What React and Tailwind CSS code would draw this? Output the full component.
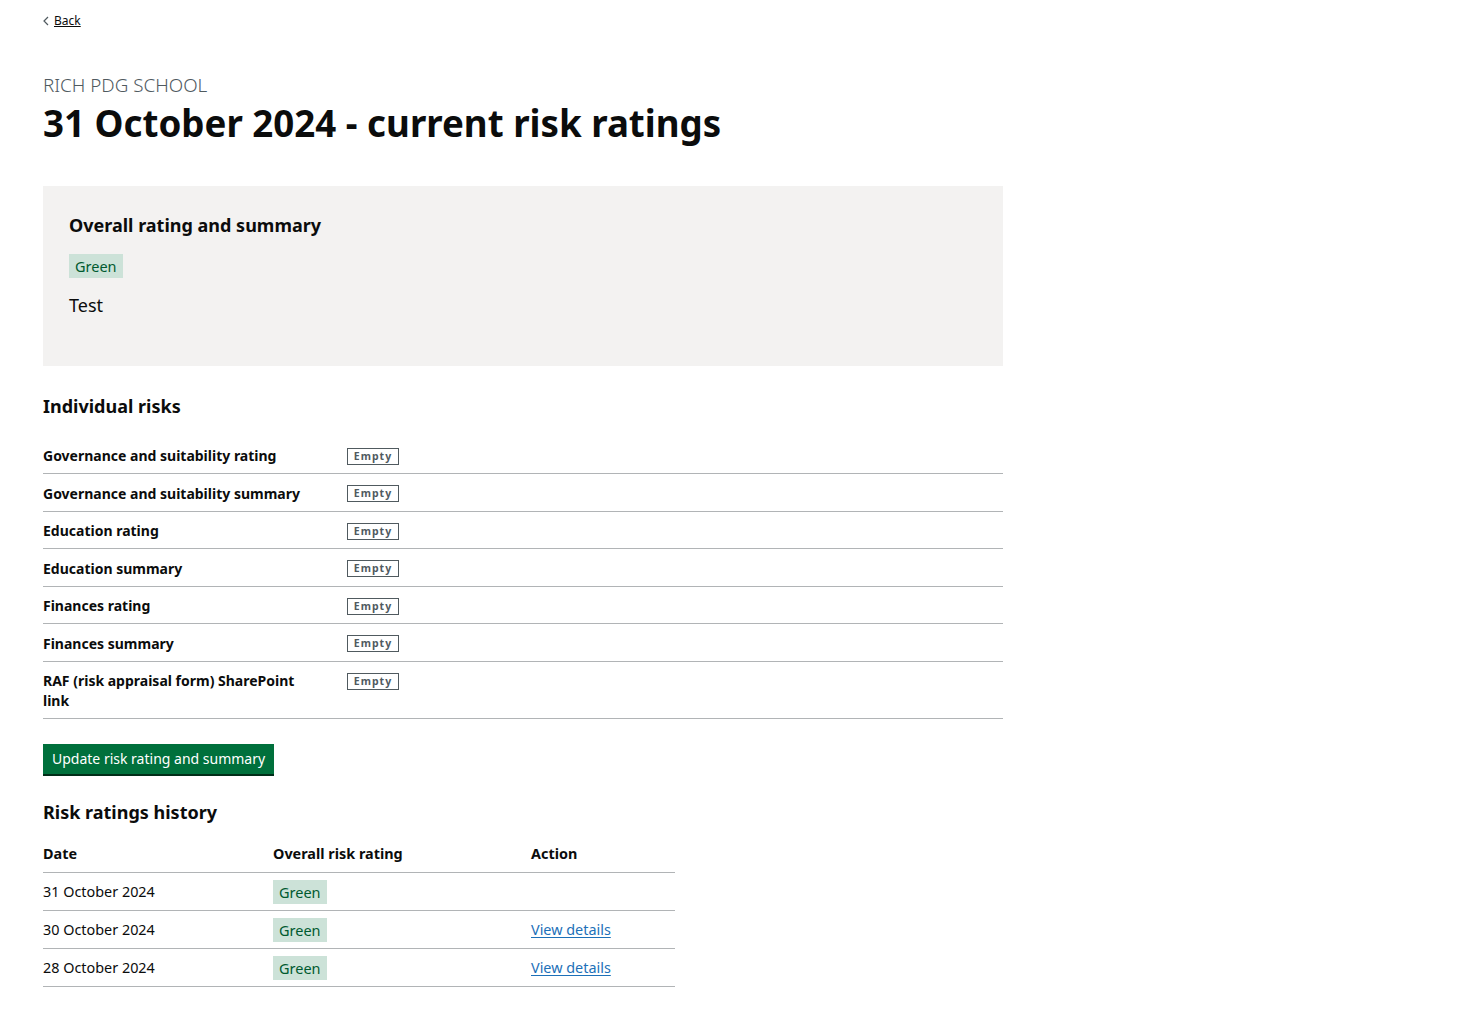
import React from "react";

const risks = [
  "Governance and suitability rating",
  "Governance and suitability summary",
  "Education rating",
  "Education summary",
  "Finances rating",
  "Finances summary",
  "RAF (risk appraisal form) SharePoint link",
];

const history = [
  { date: "31 October 2024", link: false },
  { date: "30 October 2024", link: true },
  { date: "28 October 2024", link: true },
];

function GreenTag({ className = "" }) {
  return (
    <span className={"inline-block align-top bg-[#cce2d8] text-[#005a30] text-[14.5px] leading-[24px] px-[6px] " + className}>
      Green
    </span>
  );
}

export default function App() {
  return (
    <div className="min-h-[1019px] bg-white text-[#0b0c0c] font-['Noto_Sans','Open_Sans',sans-serif]">
      <div className="px-[43px] pt-[8px]">
        <a href="#" className="inline-flex items-center gap-[5px] text-[12px] leading-[18px] text-[#0b0c0c] underline">
          <svg width="6" height="10" viewBox="0 0 6 10" className="text-[#505a5f]">
            <path d="M5 1 L1 5 L5 9" fill="none" stroke="currentColor" strokeWidth="1.2" />
          </svg>
          Back
        </a>
        <div className="mt-[42px] text-[18.8px] leading-[22px] text-[#505a5f] font-light">RICH PDG SCHOOL</div>
        <h1 className="mt-[3px] text-[36.7px] leading-[48px] font-bold">31 October 2024 - current risk ratings</h1>

        <div className="mt-[39px] w-[960px] h-[180px] bg-[#f3f2f1] px-[26px] pt-[26px]">
          <h2 className="text-[18px] leading-[26px] font-bold">Overall rating and summary</h2>
          <div className="mt-[16px] h-[24px] flex">
            <GreenTag />
          </div>
          <p className="mt-[15px] text-[18px] leading-[25px]">Test</p>
        </div>

        <h2 className="mt-[28px] text-[18px] leading-[24px] font-bold">Individual risks</h2>
        <div className="mt-[18.5px] w-[960px]">
          {risks.map((r) => (
            <div key={r} className="flex items-start border-b border-[#b1b4b6] pt-[9.5px] pb-[7px]">
              <div className="w-[304px] shrink-0 pr-[30px] text-[14px] leading-[20px] font-bold">{r}</div>
              <div className="h-[20px] flex items-center">
                <span className="block h-[17px] w-[52px] border border-[#505a5f] text-[#505a5f] text-[10.5px] leading-[15px] font-bold tracking-[1px] text-center">
                  Empty
                </span>
              </div>
            </div>
          ))}
        </div>

        <button className="mt-[25px] bg-[#00703c] text-white text-[14px] leading-[20px] px-[9px] py-[5px] shadow-[0_2px_0_#002d18]">
          Update risk rating and summary
        </button>

        <h2 className="mt-[25px] text-[18px] leading-[26px] font-bold">Risk ratings history</h2>
        <table className="mt-[13px] w-[632px] text-[14.4px] border-collapse">
          <thead>
            <tr className="border-b border-[#b1b4b6]">
              <th className="w-[230px] text-left font-bold leading-[20px] pt-[6px] pb-[8px]">Date</th>
              <th className="w-[258px] text-left font-bold leading-[20px] pt-[6px] pb-[8px]">Overall risk rating</th>
              <th className="text-left font-bold leading-[20px] pt-[6px] pb-[8px]">Action</th>
            </tr>
          </thead>
          <tbody>
            {history.map((h) => (
              <tr key={h.date} className="border-b border-[#b1b4b6]">
                <td className="py-[6.5px] leading-[24px] h-[38px]">{h.date}</td>
                <td className="py-[6.5px] leading-[24px]"><GreenTag /></td>
                <td className="py-[6.5px] leading-[24px]">
                  {h.link && (
                    <a href="#" className="text-[#1d70b8] underline underline-offset-[2px]">View details</a>
                  )}
                </td>
              </tr>
            ))}
          </tbody>
        </table>
      </div>
    </div>
  );
}
